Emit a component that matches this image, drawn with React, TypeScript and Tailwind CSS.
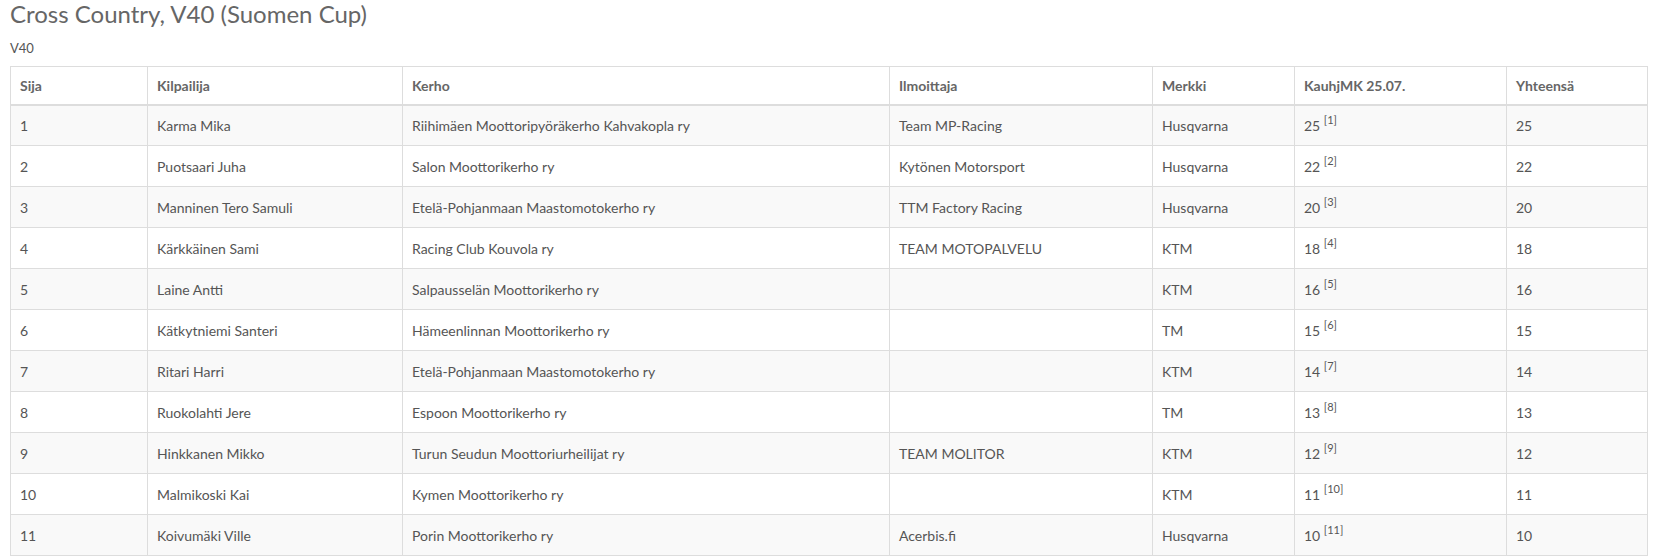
import React from "react";

type Row = {
  sija: string;
  name: string;
  club: string;
  entrant: string;
  brand: string;
  pts: string;
  ref: string;
  total: string;
};

const rows: Row[] = [
  { sija: "1", name: "Karma Mika", club: "Riihimäen Moottoripyöräkerho Kahvakopla ry", entrant: "Team MP-Racing", brand: "Husqvarna", pts: "25", ref: "1", total: "25" },
  { sija: "2", name: "Puotsaari Juha", club: "Salon Moottorikerho ry", entrant: "Kytönen Motorsport", brand: "Husqvarna", pts: "22", ref: "2", total: "22" },
  { sija: "3", name: "Manninen Tero Samuli", club: "Etelä-Pohjanmaan Maastomotokerho ry", entrant: "TTM Factory Racing", brand: "Husqvarna", pts: "20", ref: "3", total: "20" },
  { sija: "4", name: "Kärkkäinen Sami", club: "Racing Club Kouvola ry", entrant: "TEAM MOTOPALVELU", brand: "KTM", pts: "18", ref: "4", total: "18" },
  { sija: "5", name: "Laine Antti", club: "Salpausselän Moottorikerho ry", entrant: "", brand: "KTM", pts: "16", ref: "5", total: "16" },
  { sija: "6", name: "Kätkytniemi Santeri", club: "Hämeenlinnan Moottorikerho ry", entrant: "", brand: "TM", pts: "15", ref: "6", total: "15" },
  { sija: "7", name: "Ritari Harri", club: "Etelä-Pohjanmaan Maastomotokerho ry", entrant: "", brand: "KTM", pts: "14", ref: "7", total: "14" },
  { sija: "8", name: "Ruokolahti Jere", club: "Espoon Moottorikerho ry", entrant: "", brand: "TM", pts: "13", ref: "8", total: "13" },
  { sija: "9", name: "Hinkkanen Mikko", club: "Turun Seudun Moottoriurheilijat ry", entrant: "TEAM MOLITOR", brand: "KTM", pts: "12", ref: "9", total: "12" },
  { sija: "10", name: "Malmikoski Kai", club: "Kymen Moottorikerho ry", entrant: "", brand: "KTM", pts: "11", ref: "10", total: "11" },
  { sija: "11", name: "Koivumäki Ville", club: "Porin Moottorikerho ry", entrant: "Acerbis.fi", brand: "Husqvarna", pts: "10", ref: "11", total: "10" },
];

const headers = ["Sija", "Kilpailija", "Kerho", "Ilmoittaja", "Merkki", "KauhjMK 25.07.", "Yhteensä"];
const widths = [137, 255, 487, 263, 142, 212, 141];

export default function App() {
  return (
    <div
      className="w-[1654px] h-[560px] bg-white overflow-hidden text-[#555]"
      style={{ fontFamily: "Lato, 'Open Sans', sans-serif" }}
    >
      <h1 className="pl-[10px] pt-[1px] text-[24px] leading-[26px] text-[#666] font-normal">
        Cross Country, V40 (Suomen Cup)
      </h1>
      <p className="pl-[10px] mt-[12px] text-[13px] leading-[18px] text-[#555]">V40</p>
      <table className="ml-[10px] mt-[9px] w-[1637px] table-fixed border-collapse border border-[#ddd] text-[14px]">
        <colgroup>
          {widths.map((w, i) => (
            <col key={i} style={{ width: w }} />
          ))}
        </colgroup>
        <thead>
          <tr className="h-[38px] bg-white">
            {headers.map((h) => (
              <th
                key={h}
                className="border border-[#ddd] border-b-2 px-[9px] text-left font-bold text-[#666] align-middle"
              >
                {h}
              </th>
            ))}
          </tr>
        </thead>
        <tbody>
          {rows.map((r, i) => (
            <tr key={r.sija} className={i % 2 === 0 ? "h-[41px] bg-[#f9f9f9]" : "h-[41px] bg-white"}>
              <td className="border border-[#ddd] px-[9px] align-middle">{r.sija}</td>
              <td className="border border-[#ddd] px-[9px] align-middle">{r.name}</td>
              <td className="border border-[#ddd] px-[9px] align-middle">{r.club}</td>
              <td className="border border-[#ddd] px-[9px] align-middle">{r.entrant}</td>
              <td className="border border-[#ddd] px-[9px] align-middle">{r.brand}</td>
              <td className="border border-[#ddd] px-[9px] align-middle">
                {r.pts} <sup className="text-[11px] top-[-7px]">[{r.ref}]</sup>
              </td>
              <td className="border border-[#ddd] px-[9px] align-middle">{r.total}</td>
            </tr>
          ))}
        </tbody>
      </table>
    </div>
  );
}
